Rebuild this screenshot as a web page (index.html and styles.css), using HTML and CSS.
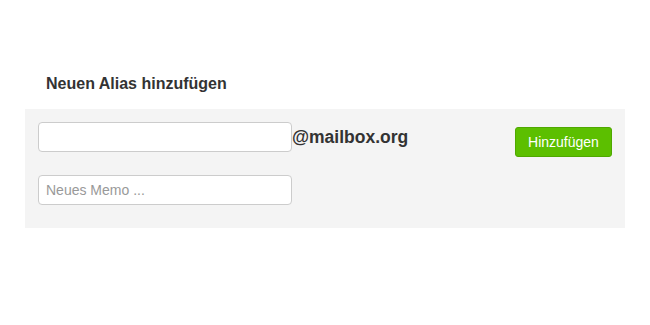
FILE: index.html
```html
<!DOCTYPE html>
<html lang="de">
<head>
<meta charset="utf-8">
<title>Neuen Alias hinzufügen</title>
<link rel="stylesheet" href="styles.css">
</head>
<body>
<div class="wrap">
  <h2 class="title">Neuen Alias hinzufügen</h2>
  <form class="panel">
    <div class="row">
      <input class="field" type="text">
      <span class="domain">@mailbox.org</span>
      <button class="btn" type="button">Hinzufügen</button>
    </div>
    <div class="row row-memo">
      <input class="field" type="text" placeholder="Neues Memo ...">
    </div>
  </form>
</div>
</body>
</html>
```
FILE: styles.css
```css
html, body {
  margin: 0;
  padding: 0;
  background: #ffffff;
  font-family: "Liberation Sans", Arial, sans-serif;
  color: #333333;
}
.wrap {
  width: 600px;
  margin-left: 25px;
  padding-top: 74px;
}
.title {
  margin: 0 0 15px 0;
  padding-left: 21px;
  font-size: 16px;
  line-height: 20px;
  font-weight: bold;
  color: #333333;
}
.panel {
  margin: 0;
  background: #f4f4f4;
  padding: 13px 13px 23px 13px;
}
.row {
  display: flex;
  align-items: flex-start;
}
.row-memo {
  margin-top: 18px;
}
.field {
  box-sizing: border-box;
  width: 254px;
  height: 30px;
  margin: 0;
  padding: 0 7px;
  border: 1px solid #cccccc;
  border-radius: 4px;
  background: #ffffff;
  font-family: "Liberation Sans", Arial, sans-serif;
  font-size: 14px;
  color: #333333;
  outline: none;
}
.field::placeholder {
  color: #999999;
}
.domain {
  font-size: 17.5px;
  font-weight: bold;
  line-height: 30px;
  color: #333333;
}
.btn {
  box-sizing: border-box;
  margin: 5px 0 0 auto;
  height: 30px;
  width: 97px;
  padding: 0;
  border: 1px solid #4fa800;
  border-radius: 3px;
  background: #5cbf00;
  color: #ffffff;
  font-family: "Liberation Sans", Arial, sans-serif;
  font-size: 14px;
  line-height: 28px;
}
```
